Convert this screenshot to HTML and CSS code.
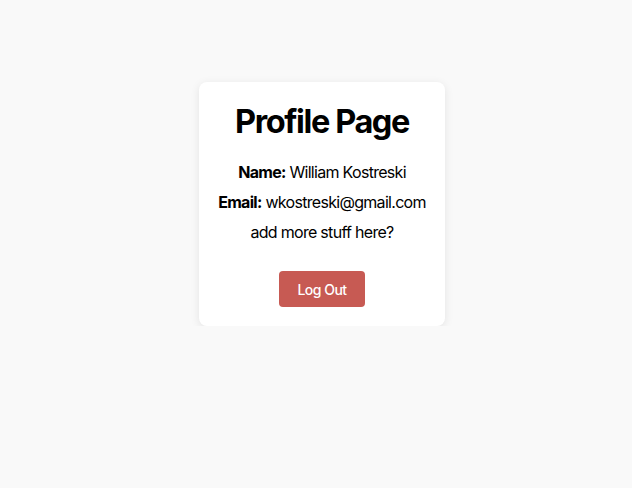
FILE: index.html
```html
<!DOCTYPE html>
<html>
<head>
<meta charset="utf-8">
<link rel="stylesheet" href="styles.css">
</head>
<body>
<main class="page">
  <section class="card">
    <h1 class="title">Profile Page</h1>
    <p class="line"><strong>Name:</strong> William Kostreski</p>
    <p class="line"><strong>Email:</strong> wkostreski@gmail.com</p>
    <p class="line">add more stuff here?</p>
    <button class="logout">Log Out</button>
  </section>
</main>
</body>
</html>
```
FILE: styles.css
```css
html, body {
  margin: 0;
  padding: 0;
  background: #f9f9f9;
}
body {
  font-family: Inter, "Noto Sans", sans-serif;
  color: #000;
}
.page {
  display: flex;
  justify-content: center;
  padding-top: 82px;
  padding-left: 12px;
}
.card {
  background: #fff;
  border-radius: 8px;
  box-shadow: 0 2px 10px rgba(0, 0, 0, 0.09);
  padding: 20px 19px 19px;
  text-align: center;
  display: flex;
  flex-direction: column;
  align-items: center;
}
.title {
  margin: 0 0 15px;
  font-size: 32.5px;
  font-weight: 700;
  line-height: 40px;
  letter-spacing: -1.4px;
  color: #000;
}
.line {
  margin: 0;
  font-size: 16px;
  line-height: 30px;
  letter-spacing: -0.7px;
}
.line strong {
  font-weight: 700;
}
.logout {
  margin-top: 24px;
  height: 36px;
  padding: 0 18px;
  border: none;
  border-radius: 4px;
  background: #c75a53;
  color: #fff;
  font-family: Inter, sans-serif;
  font-size: 14px;
  font-weight: 500;
  letter-spacing: -0.5px;
}
```
